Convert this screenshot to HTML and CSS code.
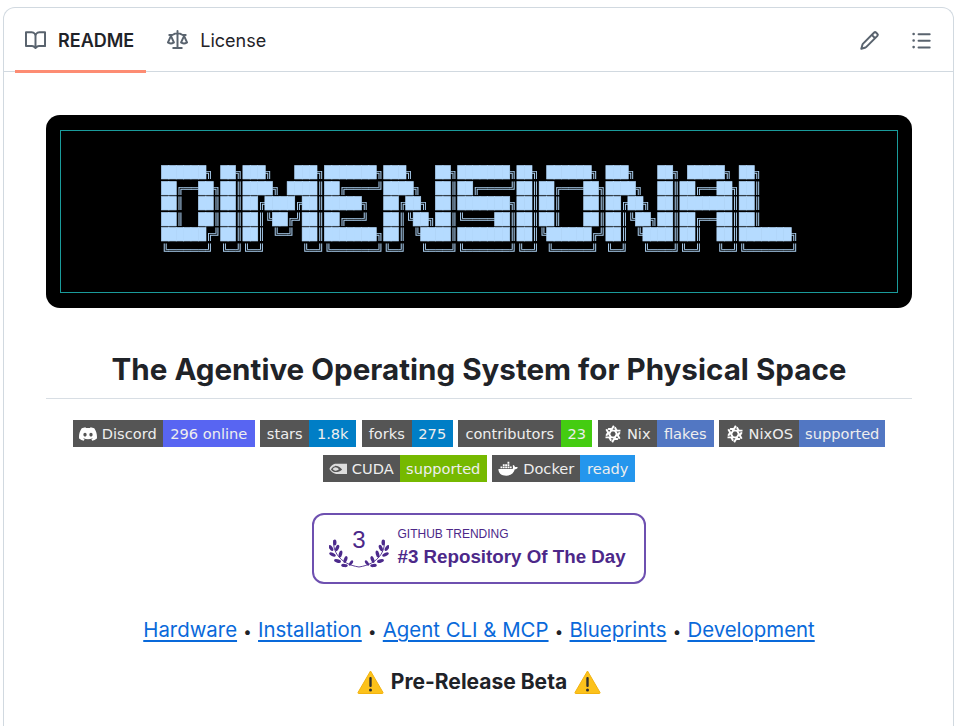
FILE: index.html
```html
<!DOCTYPE html>
<html lang="en">
<head>
    <meta charset="UTF-8">
    <meta name="viewport" content="width=device-width, initial-scale=1.0">
    <title>README - Dimensional</title>
    <link rel="stylesheet" href="styles.css">
</head>
<body>

    <svg class="defs" width="0" height="0">
        <defs>
            <g id="nixArm" fill="none" stroke="#fff" stroke-width="2.600">
                <path d="M-8.900 -6.400L-2.400 4.850"/>
                <path d="M-6.400 -2.080L-9 2.400"/>
            </g>
            <symbol id="nixIcon" viewBox="-12 -12 24 24">
                <use href="#nixArm"/>
                <use href="#nixArm" transform="rotate(60)"/>
                <use href="#nixArm" transform="rotate(120)"/>
                <use href="#nixArm" transform="rotate(180)"/>
                <use href="#nixArm" transform="rotate(240)"/>
                <use href="#nixArm" transform="rotate(300)"/>
            </symbol>
            <g id="leaves" fill="#4c2a8c">
                <path d="M5 0C3 10 10 24 30 27" fill="none" stroke="#4c2a8c" stroke-width=".9"/>
                <ellipse cx="5.800" cy="2.500" rx="1.700" ry="3"/>
                <ellipse cx="2" cy="8" rx="1.700" ry="3.300" transform="rotate(-35 2 8)"/>
                <ellipse cx="8.200" cy="8" rx="1.700" ry="3.300" transform="rotate(25 8.200 8)"/>
                <ellipse cx="3.500" cy="14.500" rx="1.700" ry="3.500" transform="rotate(-65 3.500 14.500)"/>
                <ellipse cx="11.500" cy="14" rx="1.700" ry="3.500" transform="rotate(15 11.500 14)"/>
                <ellipse cx="8.500" cy="21" rx="1.700" ry="3.500" transform="rotate(-75 8.500 21)"/>
                <ellipse cx="16.500" cy="19.500" rx="1.700" ry="3.500" transform="rotate(20 16.500 19.500)"/>
                <ellipse cx="15.500" cy="25.500" rx="1.600" ry="3.300" transform="rotate(-85 15.500 25.500)"/>
                <ellipse cx="22" cy="23" rx="1.500" ry="3" transform="rotate(35 22 23)"/>
            </g>
            <symbol id="warnIcon" viewBox="0 0 26 24">
                <path d="M13 1L25.500 22.500C25.800 23.100 25.400 23.500 24.800 23.500H1.200C.6 23.500 .2 23.100 .5 22.500Z" fill="#fcc21b" stroke="#f3b30f"/>
                <rect x="11.800" y="7" width="2.400" height="10" rx="1" fill="#2f2f2f"/>
                <circle cx="13" cy="20" r="1.500" fill="#2f2f2f"/>
            </symbol>
        </defs>
    </svg>

    <div class="card">
        <div class="tabs">
            <nav class="tab-list">
                <a class="tab active">
                    <svg class="icon" viewBox="0 0 16 16"><path d="M0 1.75A.75.75 0 0 1 .75 1h4.253c1.227 0 2.317.59 3 1.501A3.743 3.743 0 0 1 11.006 1h4.245a.75.75 0 0 1 .75.75v10.5a.75.75 0 0 1-.75.75h-4.507a2.25 2.25 0 0 0-1.591.659l-.622.621a.75.75 0 0 1-1.06 0l-.622-.621A2.25 2.25 0 0 0 5.258 13H.75a.75.75 0 0 1-.75-.75Zm7.251 10.324.004-5.073-.002-2.253A2.25 2.25 0 0 0 5.003 2.5H1.5v9h3.757a3.75 3.75 0 0 1 1.994.574ZM8.755 4.75l-.004 7.322a3.752 3.752 0 0 1 1.992-.572H14.5v-9h-3.495a2.25 2.25 0 0 0-2.25 2.25Z"/></svg>
                    README
                </a>
                <a class="tab">
                    <svg class="icon" viewBox="0 0 16 16"><path d="M8.750.75V2h.985c.304 0 .603.08.867.231l1.290.736c.038.022.08.033.124.033h2.234a.75.75 0 0 1 0 1.500h-.427l2.111 4.692a.75.75 0 0 1-.154.838l-.53-.53.529.531-.001.002-.002.002-.006.006-.006.005-.01.01-.045.04c-.21.176-.441.327-.686.45C14.556 10.780 13.880 11 13 11a4.498 4.498 0 0 1-2.023-.454 3.544 3.544 0 0 1-.686-.45l-.045-.04-.016-.015-.006-.006-.004-.004v-.001a.75.75 0 0 1-.154-.838L12.178 4.500h-.162c-.305 0-.604-.079-.868-.231l-1.290-.736a.245.245 0 0 0-.124-.033H8.750V13h2.500a.75.75 0 0 1 0 1.500h-6.500a.75.75 0 0 1 0-1.500h2.500V3.500h-.984a.245.245 0 0 0-.124.033l-1.289.737c-.265.15-.564.23-.869.23h-.162l2.112 4.692a.75.75 0 0 1-.154.838l-.53-.53.529.531-.001.002-.002.002-.006.006-.016.015-.045.04c-.21.176-.441.327-.686.45C4.556 10.780 3.880 11 3 11a4.498 4.498 0 0 1-2.023-.454 3.544 3.544 0 0 1-.686-.45l-.045-.04-.016-.015-.006-.006-.004-.004v-.001a.75.75 0 0 1-.154-.838L2.178 4.500H1.750a.75.75 0 0 1 0-1.500h2.234a.249.249 0 0 0 .125-.033l1.288-.737c.265-.15.564-.23.869-.23h.984V.75a.75.75 0 0 1 1.500 0Zm2.945 8.477c.285.135.718.273 1.305.273s1.020-.138 1.305-.273L13 6.327Zm-10 0c.285.135.718.273 1.305.273s1.020-.138 1.305-.273L3 6.327Z"/></svg>
                    License
                </a>
            </nav>
            <div class="tab-tools">
                <svg class="icon" viewBox="0 0 16 16"><path d="M11.013 1.427a1.750 1.750 0 0 1 2.474 0l1.086 1.086a1.750 1.750 0 0 1 0 2.474l-8.610 8.610c-.21.21-.47.364-.756.445l-3.251.93a.75.75 0 0 1-.927-.928l.929-3.250c.081-.286.235-.547.445-.758l8.610-8.610Zm.176 4.823L9.750 4.810l-6.286 6.287a.253.253 0 0 0-.064.108l-.558 1.953 1.953-.558a.253.253 0 0 0 .108-.064Zm1.238-3.763a.25.25 0 0 0-.354 0L10.811 3.750l1.439 1.440 1.263-1.263a.25.25 0 0 0 0-.354Z"/></svg>
                <svg class="icon" viewBox="0 0 16 16"><path d="M5.750 2.500h8.500a.75.75 0 0 1 0 1.500h-8.500a.75.75 0 0 1 0-1.500Zm0 5h8.500a.75.75 0 0 1 0 1.500h-8.500a.75.75 0 0 1 0-1.500Zm0 5h8.500a.75.75 0 0 1 0 1.500h-8.500a.75.75 0 0 1 0-1.500ZM2 14a1 1 0 1 1 0-2 1 1 0 0 1 0 2Zm1-6a1 1 0 1 1-2 0 1 1 0 0 1 2 0ZM2 4a1 1 0 1 1 0-2 1 1 0 0 1 0 2Z"/></svg>
            </div>
        </div>

        <article class="readme">
            <div class="banner">
                <div class="banner-frame">
<pre class="ascii"><b>██████</b>╗ <b>██</b>╗<b>███</b>╗   <b>███</b>╗<b>███████</b>╗<b>███</b>╗   <b>██</b>╗<b>███████</b>╗<b>██</b>╗ <b>██████</b>╗ <b>███</b>╗   <b>██</b>╗ <b>█████</b>╗ <b>██</b>╗     
<b>██</b>╔══<b>██</b>╗<b>██</b>║<b>████</b>╗ <b>████</b>║<b>██</b>╔════╝<b>████</b>╗  <b>██</b>║<b>██</b>╔════╝<b>██</b>║<b>██</b>╔═══<b>██</b>╗<b>████</b>╗  <b>██</b>║<b>██</b>╔══<b>██</b>╗<b>██</b>║     
<b>██</b>║  <b>██</b>║<b>██</b>║<b>██</b>╔<b>████</b>╔<b>██</b>║<b>█████</b>╗  <b>██</b>╔<b>██</b>╗ <b>██</b>║<b>███████</b>╗<b>██</b>║<b>██</b>║   <b>██</b>║<b>██</b>╔<b>██</b>╗ <b>██</b>║<b>███████</b>║<b>██</b>║     
<b>██</b>║  <b>██</b>║<b>██</b>║<b>██</b>║╚<b>██</b>╔╝<b>██</b>║<b>██</b>╔══╝  <b>██</b>║╚<b>██</b>╗<b>██</b>║╚════<b>██</b>║<b>██</b>║<b>██</b>║   <b>██</b>║<b>██</b>║╚<b>██</b>╗<b>██</b>║<b>██</b>╔══<b>██</b>║<b>██</b>║     
<b>██████</b>╔╝<b>██</b>║<b>██</b>║ ╚═╝ <b>██</b>║<b>███████</b>╗<b>██</b>║ ╚<b>████</b>║<b>███████</b>║<b>██</b>║╚<b>██████</b>╔╝<b>██</b>║ ╚<b>████</b>║<b>██</b>║  <b>██</b>║<b>███████</b>╗
╚═════╝ ╚═╝╚═╝     ╚═╝╚══════╝╚═╝  ╚═══╝╚══════╝╚═╝ ╚═════╝ ╚═╝  ╚═══╝╚═╝  ╚═╝╚══════╝</pre>
                </div>
            </div>

            <h1>The Agentive Operating System for Physical Space</h1>

            <div class="badges">
                <span class="badge">
                    <span class="key w-discord"><svg class="logo" viewBox="0 0 24 24"><path fill="#fff" d="M20.317 4.370a19.791 19.791 0 0 0-4.885-1.515.074.074 0 0 0-.079.037c-.211.375-.445.865-.608 1.250-1.845-.276-3.680-.276-5.487 0-.164-.393-.406-.874-.618-1.250a.077.077 0 0 0-.079-.037 19.736 19.736 0 0 0-4.885 1.515.07.07 0 0 0-.032.028C.533 9.046-.319 13.580.099 18.058a.082.082 0 0 0 .031.056c2.053 1.508 4.041 2.423 5.993 3.029a.078.078 0 0 0 .084-.028c.462-.630.873-1.295 1.226-1.994a.076.076 0 0 0-.042-.106c-.653-.248-1.274-.549-1.872-.892a.077.077 0 0 1-.008-.128c.126-.094.252-.192.372-.291a.074.074 0 0 1 .078-.011c3.928 1.793 8.180 1.793 12.061 0a.074.074 0 0 1 .079.01c.12.099.246.198.373.292a.077.077 0 0 1-.007.128 12.299 12.299 0 0 1-1.873.891.077.077 0 0 0-.041.107c.36.698.772 1.363 1.225 1.993a.076.076 0 0 0 .084.029c1.961-.607 3.950-1.522 6.002-3.029a.077.077 0 0 0 .031-.055c.500-5.177-.838-9.674-3.548-13.660a.061.061 0 0 0-.031-.029zM8.020 15.331c-1.183 0-2.157-1.086-2.157-2.419 0-1.333.956-2.419 2.157-2.419 1.211 0 2.176 1.095 2.157 2.419 0 1.333-.956 2.419-2.157 2.419zm7.975 0c-1.183 0-2.157-1.086-2.157-2.419 0-1.333.955-2.419 2.157-2.419 1.211 0 2.176 1.095 2.157 2.419 0 1.333-.946 2.419-2.157 2.419z"/></svg>Discord</span><span class="val w-online c-discord">296 online</span>
                </span>
                <span class="badge"><span class="key w-stars">stars</span><span class="val w-count c-blue">1.8k</span></span>
                <span class="badge"><span class="key w-forks">forks</span><span class="val w-forkn c-blue">275</span></span>
                <span class="badge"><span class="key w-contrib">contributors</span><span class="val w-num c-green">23</span></span>
                <span class="badge"><span class="key w-nix"><svg class="logo"><use href="#nixIcon"/></svg>Nix</span><span class="val w-flakes c-nix">flakes</span></span>
                <span class="badge"><span class="key w-nixos"><svg class="logo"><use href="#nixIcon"/></svg>NixOS</span><span class="val w-supp c-nix">supported</span></span>
                <span class="badge">
                    <span class="key w-cuda"><svg class="logo" viewBox="0 0 24 16"><path fill="#ddd" d="M8 1C4.500 2 1.500 5 .5 8c2 3 5 6 9 6.500H24V1Zm0 2.500c4 0 7 2 9.500 5-2.500 2.500-5.500 3.500-8 3.500-3 0-5.500-1.500-7-3.500C4 6 6 4.500 8 4.300Zm.5 2.200c2 0 3.500 1 4.800 2.700-1.300 1.300-2.800 1.800-4 1.800-1.800 0-3.300-.8-4.300-2 1-1.500 2.200-2.400 3.500-2.500Z"/></svg>CUDA</span><span class="val w-cusupp c-cuda">supported</span>
                </span>
                <span class="badge">
                    <span class="key w-docker"><svg class="logo logo-wide" viewBox="0 0 24 18"><path fill="#fff" d="M.5 9h17c.8-1.800.6-3 0-4l1.300-.8c1 .8 1.500 1.800 1.600 2.700 1-.4 2.300-.3 3.400.3-.6 1.400-2 2.200-3.600 2.200C19 14 15.500 17 10 17 4 17 .5 14 .5 9Z"/><path fill="#fff" d="M3 6h2.200v2.200H3Zm2.800 0H8v2.200H5.800Zm2.800 0h2.200v2.200H8.600Zm2.800 0h2.200v2.200h-2.200Zm2.800 0h2.200v2.200h-2.200ZM5.800 3.200H8v2.200H5.800Zm2.800 0h2.200v2.200H8.600Zm2.800 0h2.200v2.200h-2.200Zm0-2.800h2.200v2.200h-2.200Z"/></svg>Docker</span><span class="val w-ready c-docker">ready</span>
                </span>
            </div>

            <div class="trending">
                <svg class="laurel" viewBox="0 0 60 46" width="60" height="46">
                    <text class="laurel-num" x="30" y="22" text-anchor="middle">3</text>
                    <g transform="translate(0 14)"><use href="#leaves"/></g>
                    <g transform="translate(60 14) scale(-1 1)"><use href="#leaves"/></g>
                </svg>
                <div class="trending-text">
                    <span class="trending-top">GITHUB TRENDING</span>
                    <strong class="trending-title">#3 Repository Of The Day</strong>
                </div>
            </div>

            <p class="links">
                <a href="#">Hardware</a><span class="dot">•</span><a href="#">Installation</a><span class="dot">•</span><a href="#">Agent CLI &amp; MCP</a><span class="dot">•</span><a href="#">Blueprints</a><span class="dot">•</span><a href="#">Development</a>
            </p>

            <p class="beta">
                <svg class="warn"><use href="#warnIcon"/></svg>
                <strong>Pre-Release Beta</strong>
                <svg class="warn"><use href="#warnIcon"/></svg>
            </p>
        </article>
    </div>

</body>
</html>
```

FILE: styles.css
```css
html, body {
    margin: 0;
    height: 726px;
    overflow: hidden;
    background: #fff;
}
body {
    font-family: Inter, "Liberation Sans", sans-serif;
    color: #1f2328;
    padding: 7px 0 0 3px;
    box-sizing: border-box;
}
.defs {
    display: block;
    height: 0;
}
.card {
    width: 951px;
    height: 719px;
    box-sizing: border-box;
    border: 1px solid #d1d9e0;
    border-bottom: none;
    border-radius: 12px 12px 0 0;
}
.tabs {
    display: flex;
    justify-content: space-between;
    height: 64px;
    box-sizing: border-box;
    border-bottom: 1px solid #d1d9e0;
    padding: 0 21px 0 11px;
}
.tab-list {
    display: flex;
}
.tab {
    display: flex;
    align-items: center;
    gap: 12px;
    height: 65px;
    box-sizing: border-box;
    padding: 3px 12px 0 10px;
    font-size: 18px;
    color: #1f2328;
    border-bottom: 3px solid transparent;
}
.tab + .tab {
    margin-left: 11px;
}
.tab.active {
    font-weight: 600;
    border-bottom-color: #fd8c73;
}
.icon {
    width: 21px;
    height: 21px;
    fill: #59636e;
}
.tab-tools {
    display: flex;
    align-items: center;
    gap: 31px;
    padding-top: 2px;
}
.readme {
    padding: 43px 41px 0 42px;
}
.banner {
    height: 193px;
    box-sizing: border-box;
    background: #000;
    border-radius: 14px;
    padding: 15px 14px;
}
.banner-frame {
    height: 100%;
    box-sizing: border-box;
    border: 1px solid #1a9b9b;
    display: flex;
    justify-content: center;
    align-items: center;
}
.ascii {
    margin: 0 0 0 2px;
    font-family: "DejaVu Sans Mono", monospace;
    font-size: 11.4px;
    line-height: 15.5px;
    color: #a9cdee;
    transform: scaleX(1.08);
    will-change: transform;
}
.ascii b {
    font-weight: normal;
    color: #b5dbff;
    -webkit-text-stroke: 0.5px #b5dbff;
}
h1 {
    margin: 43px 0 0;
    padding-bottom: 11px;
    border-bottom: 1px solid #d8dee4;
    text-align: center;
    font-size: 29.6px;
    line-height: 36px;
    font-weight: 700;
}
.badges {
    display: flex;
    flex-wrap: wrap;
    justify-content: center;
    gap: 8px 5.5px;
    margin-top: 21px;
}
.badge {
    display: flex;
    height: 27px;
    font-family: "DejaVu Sans", sans-serif;
    font-size: 14.6px;
    color: #fff;
    line-height: 27px;
}
.key {
    display: flex;
    align-items: center;
    justify-content: center;
    gap: 5px;
    background: #555;
    color: #eee;
}
.val {
    text-align: center;
    color: #eee;
}
.logo {
    width: 18px;
    height: 18px;
}
.logo-wide {
    width: 20px;
}
.w-discord { width: 90px; }
.w-online { width: 92px; }
.w-stars { width: 49px; }
.w-count { width: 47px; }
.w-forks { width: 50px; }
.w-forkn { width: 41px; }
.w-contrib { width: 103px; }
.w-num { width: 31px; }
.w-nix { width: 59px; }
.w-flakes { width: 57px; }
.w-nixos { width: 80px; }
.w-supp { width: 86px; }
.w-cuda { width: 77px; }
.w-cusupp { width: 87px; }
.w-docker { width: 88px; }
.w-ready { width: 55px; }
.c-discord { background: #5865f2; }
.c-blue { background: #007ec6; }
.c-green { background: #44cc11; }
.c-nix { background: #5277c3; }
.c-cuda { background: #76b900; }
.c-docker { background: #2496ed; }
.trending {
    display: flex;
    align-items: center;
    gap: 9px;
    width: 334px;
    height: 71px;
    box-sizing: border-box;
    margin: 31px auto 0;
    padding: 0 14.5px;
    border: 2px solid #6e50b0;
    border-radius: 12px;
    font-family: "Liberation Sans", Arial, sans-serif;
    color: #4c2889;
}
.laurel-num {
    font-size: 24px;
    fill: #4c2889;
    font-family: "Liberation Sans", Arial, sans-serif;
}
.trending-text {
    display: flex;
    flex-direction: column;
    gap: 5px;
    margin-bottom: 3px;
}
.trending-top {
    font-size: 12px;
}
.trending-title {
    font-size: 18.75px;
}
.links {
    margin: 33px 0 0;
    text-align: center;
    font-size: 20.4px;
    line-height: 26px;
}
.links a {
    color: #0969da;
    text-decoration-thickness: 2px;
    text-underline-offset: 3px;
}
.dot {
    display: inline-block;
    width: 21px;
    font-size: 15px;
}
.beta {
    display: flex;
    justify-content: center;
    align-items: center;
    gap: 7px;
    margin: 24px 0 0;
    font-size: 21px;
    line-height: 26px;
}
.warn {
    width: 27px;
    height: 24px;
}
```
